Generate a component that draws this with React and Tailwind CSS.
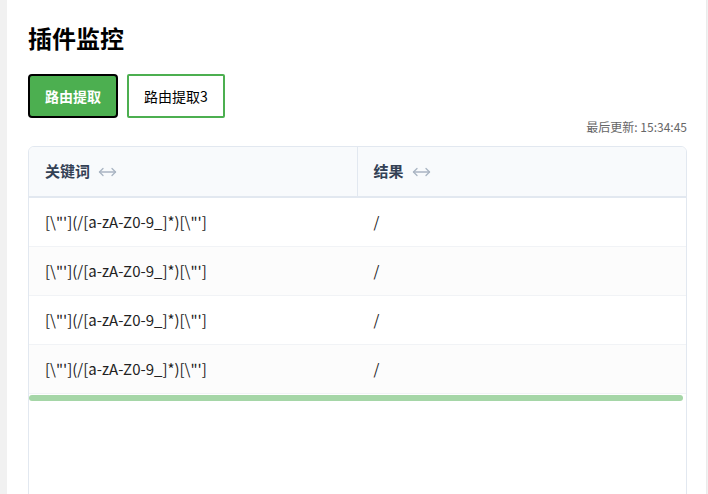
import React from "react";

const rows = [
  { key: "[\\\"'](/[a-zA-Z0-9_]*)[\\\"']", result: "/" },
  { key: "[\\\"'](/[a-zA-Z0-9_]*)[\\\"']", result: "/" },
  { key: "[\\\"'](/[a-zA-Z0-9_]*)[\\\"']", result: "/" },
  { key: "[\\\"'](/[a-zA-Z0-9_]*)[\\\"']", result: "/" },
];

function ResizeIcon() {
  return (
    <svg width="19" height="10" viewBox="0 0 19 10" fill="none" stroke="#a9b4c2" strokeWidth="1.3" strokeLinecap="round" strokeLinejoin="round">
      <path d="M1.5 5h16" />
      <path d="M5 1.5 1.5 5 5 8.5" />
      <path d="M14 1.5 17.5 5 14 8.5" />
    </svg>
  );
}

export default function App() {
  return (
    <div
      className="min-h-screen bg-[#f1f1f1] pl-[7px] overflow-hidden"
      style={{ fontFamily: '"Noto Sans CJK SC", "Noto Sans", sans-serif' }}
    >
      <div className="min-h-[494px] w-[700px] bg-white border-r border-[#ebebeb] pl-[21px] pr-[19px] pt-[22px]">
        <h1 className="text-[24px] leading-[32px] font-bold text-black">插件监控</h1>

        <div className="mt-[20px] flex gap-[9px]">
          <button className="h-[44px] px-[15px] rounded-[4px] border-2 border-black bg-[#4caf50] text-white text-[14px] font-bold">
            路由提取
          </button>
          <button className="h-[44px] px-[15px] rounded-[2px] border-2 border-[#4caf50] bg-white text-black text-[14px]">
            路由提取3
          </button>
        </div>

        <div className="mt-[1px] text-right text-[12px] leading-[16px] text-[#666]">最后更新: 15:34:45</div>

        <div className="mt-[11px] h-[360px] rounded-t-[6px] border border-[#e2e8f0] overflow-hidden">
          <div className="grid grid-cols-2 h-[51px] bg-[#f8fafc] border-b-2 border-[#e2e8f0]">
            <div className="flex items-center gap-[8px] pl-[16px] border-r border-[#e2e8f0] text-[15px] font-bold text-[#334155]">
              关键词 <ResizeIcon />
            </div>
            <div className="flex items-center gap-[8px] pl-[16px] text-[15px] font-bold text-[#334155]">
              结果 <ResizeIcon />
            </div>
          </div>
          {rows.map((r, i) => (
            <div
              key={i}
              className={`grid grid-cols-2 h-[49px] border-b border-[#f1f3f6] text-[15px] text-[#222] ${
                i % 2 === 1 ? "bg-[#fcfcfc]" : "bg-white"
              }`}
            >
              <div className="flex items-center pl-[16px]">{r.key}</div>
              <div className="flex items-center pl-[16px]">{r.result}</div>
            </div>
          ))}
          <div className="mt-px mr-[3px] h-[6px] rounded-full bg-[#a5d6a7]"></div>
        </div>
      </div>
    </div>
  );
}
